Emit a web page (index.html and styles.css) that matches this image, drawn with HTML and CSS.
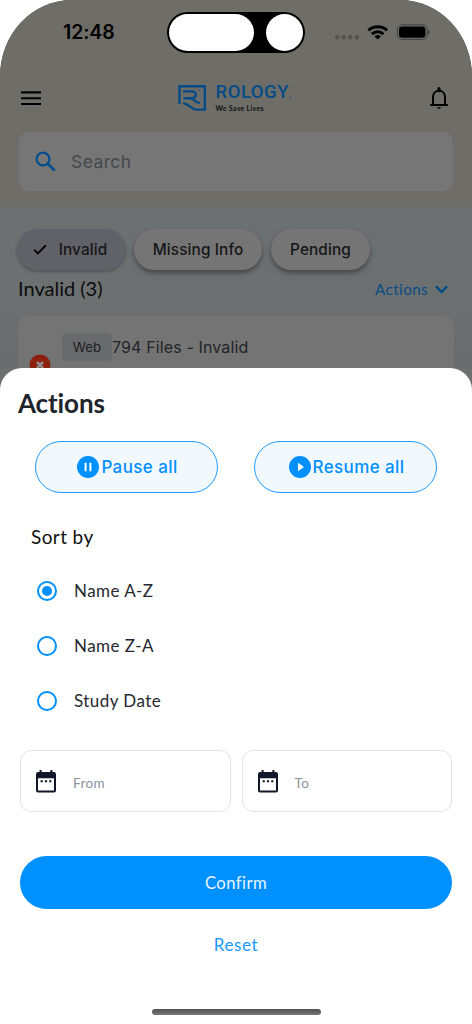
FILE: index.html
```html
<!DOCTYPE html>
<html lang="en">
<head>
<meta charset="utf-8">
<title>Rology</title>
<link rel="stylesheet" href="styles.css">
</head>
<body>
<div class="phone">
  <header class="top">
    <div class="status">
      <span class="time">12:48</span>
      <div class="island"><i class="pill"></i><i class="lens"></i></div>
      <svg class="signals" width="98" height="20" viewBox="0 0 98 20">
        <g fill="#54534f"><circle cx="5.2" cy="14.3" r="2.2"/><circle cx="11.6" cy="14.3" r="2.2"/><circle cx="18.2" cy="14.3" r="2.2"/><circle cx="25" cy="14.3" r="2.2"/></g>
        <g fill="none" stroke="#000" stroke-width="3"><path d="M36.4 7.4a13.5 13.5 0 0 1 18.6 0"/><path d="M39.9 11.1a8.4 8.4 0 0 1 11.6 0"/></g>
        <path d="M45.7 16.6l-3.2-3.2a4.8 4.8 0 0 1 6.4 0z"/>
        <rect x="65.4" y="1.8" width="30" height="14.6" rx="4.6" fill="none" stroke="#42413e"/>
        <rect x="67" y="3.5" width="26.5" height="11.3" rx="3.2"/>
        <path d="M96.4 6.8q1.6.6 1.6 2.3t-1.6 2.3z" fill="#42413e"/>
      </svg>
    </div>
    <div class="brandbar">
      <svg width="20" height="16" viewBox="0 0 20 16" stroke="#000" stroke-width="2.1"><path d="M0 2.4h20M0 8.2h20M0 14h20"/></svg>
      <div class="brand">
        <svg width="29" height="28" viewBox="0 0 29 28" fill="none" stroke="#034c87" stroke-width="2.4">
          <path d="M1.5 20V2.3h25.3v23.3h-8.3C13 25.6 11 19.4 5 19.4"/>
          <path d="M5 7.4h8.7c5.4 0 5.4 6.8 0 6.8H5.5M12.5 14.2c3 .3 4.5 5 9.8 5"/>
          <path d="M20.5 6.2h2.4" stroke-width="1"/>
        </svg>
        <div class="words"><b>ROLOGY<small>.</small></b><span>We Save Lives</span></div>
      </div>
      <svg width="20" height="24" viewBox="0 0 20 24" fill="none" stroke="#000" stroke-width="2">
        <path d="M1.2 19h17.6M4 19V11c0-8.2 12-8.2 12 0v8"/><path d="M10 4.8V2.4" stroke-width="3" stroke-linecap="round"/><path d="M8 21.2h4q-.5 1.6-2 1.6t-2-1.6z" fill="#000" stroke="none"/>
      </svg>
    </div>
    <div class="search">
      <svg width="21" height="21" viewBox="0 0 21 21" fill="none" stroke="#034f8e" stroke-width="2.3"><circle cx="8" cy="8" r="6.4"/><path d="M12.6 12.6l7 7" stroke-width="2.8"/></svg>
      <span>Search</span>
    </div>
  </header>
  <main class="list">
    <div class="chips">
      <div class="chip chosen"><svg width="14" height="11" viewBox="0 0 14 11" fill="none" stroke="#000" stroke-width="1.9"><path d="M1.2 5.8l3.6 3.6L12.8 1.3"/></svg><span>Invalid</span></div>
      <div class="chip missing"><span>Missing Info</span></div>
      <div class="chip pending"><span>Pending</span></div>
    </div>
    <div class="listhead">
      <span class="count">Invalid (3)</span>
      <span class="menu"><span>Actions</span><svg width="13" height="9" viewBox="0 0 13 9" fill="none" stroke="#034c87" stroke-width="2.4"><path d="M1 1.4l5.5 5.7L12 1.4"/></svg></span>
    </div>
    <div class="card">
      <svg class="fail" width="22" height="22" viewBox="0 0 22 22"><circle cx="11" cy="11" r="10.5" fill="#8d2110"/><path d="M8 8l6 6M14 8l-6 6" stroke="#8e8e8e" stroke-width="2.5"/></svg>
      <span class="tag">Web</span><span class="files">794 Files - Invalid</span>
    </div>
  </main>
  <section class="sheet">
    <h1>Actions</h1>
    <div class="bulk">
      <button><svg width="22" height="22" viewBox="0 0 22 22"><circle cx="11" cy="11" r="11" fill="#0190ff"/><path d="M8.6 6.8v8.4M13.4 6.8v8.4" stroke="#fff" stroke-width="2"/></svg><span>Pause all</span></button>
      <button><svg width="22" height="22" viewBox="0 0 22 22"><circle cx="11" cy="11" r="11" fill="#0190ff"/><path d="M9 6.8v8.4l6-4.2z" fill="#fff"/></svg><span>Resume all</span></button>
    </div>
    <h2>Sort by</h2>
    <div class="options">
      <label><i class="radio on"></i><span>Name A-Z</span></label>
      <label><i class="radio"></i><span>Name Z-A</span></label>
      <label><i class="radio"></i><span>Study Date</span></label>
    </div>
    <div class="range">
      <div class="field"><svg width="20" height="23" viewBox="0 0 20 23"><path fill="#101729" fill-rule="evenodd" d="M3.6 0h2v2.1h8.8V0h2v2.1h1.4a2.2 2.2 0 0 1 2.2 2.2v16.2a2 2 0 0 1-2 2H2a2 2 0 0 1-2-2V4.3a2.2 2.2 0 0 1 2.2-2.2h1.4zM2 8.2v12.3h16V8.2z"/><path d="M4.6 11.3h2.2M8.9 11.3h2.2M13.2 11.3h2.2" stroke="#101729" stroke-width="2"/></svg><span>From</span></div>
      <div class="field"><svg width="20" height="23" viewBox="0 0 20 23"><path fill="#101729" fill-rule="evenodd" d="M3.6 0h2v2.1h8.8V0h2v2.1h1.4a2.2 2.2 0 0 1 2.2 2.2v16.2a2 2 0 0 1-2 2H2a2 2 0 0 1-2-2V4.3a2.2 2.2 0 0 1 2.2-2.2h1.4zM2 8.2v12.3h16V8.2z"/><path d="M4.6 11.3h2.2M8.9 11.3h2.2M13.2 11.3h2.2" stroke="#101729" stroke-width="2"/></svg><span>To</span></div>
    </div>
    <button class="confirm">Confirm</button>
    <div class="reset">Reset</div>
    <div class="home"></div>
  </section>
</div>
</body>
</html>
```
FILE: styles.css
```css
* { box-sizing: border-box; }
body { margin: 0; background: #fff; font-family: Lato, sans-serif; }
svg { display: block; flex: none; }
h1, h2 { margin: 0; }
button { font: inherit; padding: 0; margin: 0; }
.phone { width: 472px; height: 1024px; overflow: hidden; border-radius: 72px 72px 0 0 / 76px 76px 0 0; background: #6d7070; }

.top { height: 206px; background: #6e6d67; }
.status { height: 76px; display: grid; grid-template-columns: 167px 138px 167px; align-items: start; }
.time { padding: 20px 0 0 63px; font: 600 19.5px/25px Inter, sans-serif; letter-spacing: -.1px; color: #000; }
.island { margin-top: 12px; height: 41px; border-radius: 21px; background: #000; padding: 2px; display: flex; justify-content: space-between; }
.pill { width: 85px; height: 37px; border-radius: 19px; background: #fff; }
.lens { width: 37px; height: 37px; border-radius: 50%; background: #fff; }
.signals { margin: 23px 0 0 27px; }
.brandbar { height: 44px; padding: 0 23px 0 21px; display: flex; align-items: center; justify-content: space-between; }
.brand { display: flex; gap: 9px; margin-left: 1px; }
.words { width: 78px; display: flex; flex-direction: column; color: #034c87; }
.words b { font: 500 18.5px/17px Roboto, sans-serif; letter-spacing: .5px; white-space: nowrap; }
.words small { font-size: 10px; }
.words span { font: 700 7px/10px Lato, sans-serif; color: #101010; letter-spacing: .3px; margin-top: 0; }
.search { margin: 12px 19px 0; height: 59px; border-radius: 9px; background: #767676; box-shadow: 0 0 2px #676b70; display: flex; align-items: center; gap: 15px; padding-left: 16px; }
.search span { font: 400 17.5px/24px Inter, sans-serif; letter-spacing: .4px; color: #45484d; }

.list { height: 162px; padding: 23px 18px 0 17px; background: linear-gradient(#6d7070 0 60%, #696c6c); }
.chips { display: flex; gap: 8px; }
.chip { height: 41px; border-radius: 21px; display: flex; align-items: center; justify-content: center; background: #757575; box-shadow: 0 3px 5px #454747; font: 500 15.3px/20px Inter, sans-serif; letter-spacing: .15px; color: #151617; }
.chosen { width: 109px; gap: 12px; padding-right: 3px; background: #606267; box-shadow: 0 2px 3px #535558; }
.missing { width: 128px; margin-right: 1px; }
.pending { width: 99px; }
.listhead { height: 38px; padding: 0 7px 0 1px; display: flex; align-items: center; justify-content: space-between; }
.count { font-size: 20px; line-height: 24px; margin-top: -2px; letter-spacing: 0; color: #0c0d0e; }
.menu { display: flex; align-items: center; gap: 7px; color: #034c87; font-size: 15.2px; letter-spacing: .4px; margin-right: -1px; }
.card { margin: 8px 0 0 1px; height: 70px; border-radius: 9px; background: #747474; padding: 17px 0 0 11px; display: flex; align-items: flex-start; }
.fail { margin: 21px 11px 0 0; }
.tag { width: 50px; height: 28px; border-radius: 5px; background: #696a6e; text-align: center; font: 400 13.2px/29px Inter, sans-serif; letter-spacing: .2px; color: #1c1e21; }
.files { font: 400 16px/29px Inter, sans-serif; letter-spacing: .13px; color: #222427; }

.sheet { position: relative; height: 656px; background: #fff; border-radius: 22px 22px 0 0; padding: 18px 20px 0; }
h1 { margin-left: -2px; font: 700 26px/35px Lato, sans-serif; letter-spacing: -.1px; color: #20242b; }
.bulk { margin: 20px 15px 0; display: flex; justify-content: space-between; }
.bulk button { width: 183px; height: 52px; border: 1.3px solid #209bff; border-radius: 27px; background: #f1f9ff; display: flex; align-items: center; justify-content: center; gap: 2px; padding-left: 2px; font: 500 17px/22px Inter, sans-serif; letter-spacing: .4px; color: #0190ff; }
h2 { margin: 31px 0 0 11px; font: 400 19px/26px Lato, sans-serif; letter-spacing: .4px; color: #111; }
.options { padding: 13px 17px 0; }
.options label { height: 55px; display: flex; align-items: center; gap: 17px; font-size: 17px; letter-spacing: .45px; color: #25282e; }
.options span { margin-top: -1px; }
.radio { width: 20px; height: 20px; border: 2.4px solid #0190ff; border-radius: 50%; display: grid; place-items: center; }
.on::after { content: ""; width: 10px; height: 10px; border-radius: 50%; background: #0190ff; }
.range { margin-top: 22px; display: flex; gap: 11px; }
.field { flex: 1; height: 62px; border: 1px solid #e3e4ea; border-radius: 11px; display: flex; align-items: center; padding-left: 15px; gap: 17px; font-size: 13.5px; letter-spacing: .4px; color: #8b929e; }
.field span { padding-top: 4px; }
.confirm { display: block; width: 432px; height: 53px; margin-top: 44px; border: 0; border-radius: 27px; background: #0190ff; color: #e8f5ff; font-size: 16.7px; letter-spacing: .4px; }
.reset { margin-top: 24px; text-align: center; font-size: 17px; line-height: 24px; letter-spacing: .6px; color: #1799ff; }
.home { width: 169px; height: 6px; margin: 52px auto 0; border-radius: 3px; background: linear-gradient(#505050, #777); }
```
